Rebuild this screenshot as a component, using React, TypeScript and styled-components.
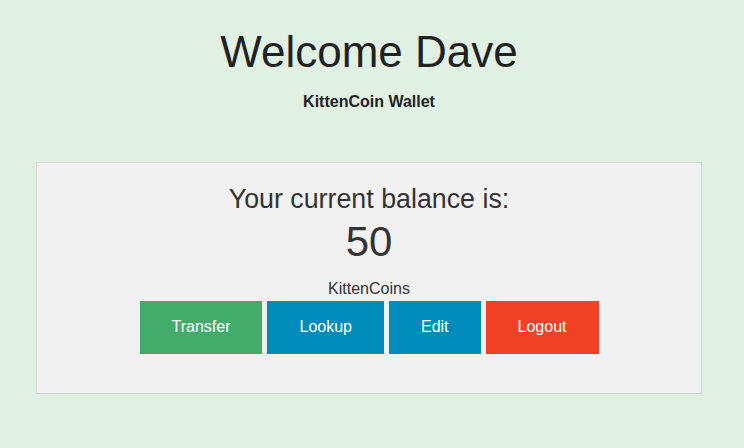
import React from "react";
import styled, { createGlobalStyle } from "styled-components";

const GlobalStyle = createGlobalStyle`
  html, body {
    margin: 0;
    padding: 0;
    background: #e0f0e2;
    font-family: "Liberation Sans", Arial, sans-serif;
  }
`;

const Page = styled.div`
  padding: 27px 42px 0 36px;
  color: #222;
`;

const Title = styled.h1`
  margin: 0;
  font-size: 44px;
  line-height: 50px;
  font-weight: 400;
  text-align: center;
  color: #222;
`;

const Subtitle = styled.h2`
  margin: 15px 0 0;
  font-size: 16px;
  line-height: 20px;
  font-weight: 700;
  text-align: center;
  color: #222;
`;

const Panel = styled.section`
  margin-top: 50px;
  background: #f1f1f1;
  border: 1px solid #d6d6d6;
  padding: 20px 0 39px;
  display: flex;
  flex-direction: column;
  align-items: center;
  color: #333;
`;

const BalanceLabel = styled.div`
  font-size: 26.8px;
  line-height: 32px;
`;

const Amount = styled.div`
  margin-top: 3px;
  font-size: 42px;
  line-height: 48px;
`;

const Unit = styled.div`
  margin-top: 13px;
  font-size: 16px;
  line-height: 20px;
`;

const Actions = styled.div`
  margin-top: 1.5px;
  display: flex;
  gap: 5px;
`;

const ActionButton = styled.button<{ $bg: string }>`
  height: 53px;
  padding: 0 32px;
  border: none;
  border-radius: 0;
  background: ${(p) => p.$bg};
  color: #fff;
  font-family: "Liberation Sans", Arial, sans-serif;
  font-size: 16px;
  cursor: pointer;
`;

export default function App() {
  return (
    <>
      <GlobalStyle />
      <Page>
        <Title>Welcome Dave</Title>
        <Subtitle>KittenCoin Wallet</Subtitle>
        <Panel>
          <BalanceLabel>Your current balance is:</BalanceLabel>
          <Amount>50</Amount>
          <Unit>KittenCoins</Unit>
          <Actions>
            <ActionButton $bg="#43ac6a">Transfer</ActionButton>
            <ActionButton $bg="#008cba">Lookup</ActionButton>
            <ActionButton $bg="#008cba">Edit</ActionButton>
            <ActionButton $bg="#f04124">Logout</ActionButton>
          </Actions>
        </Panel>
      </Page>
    </>
  );
}
